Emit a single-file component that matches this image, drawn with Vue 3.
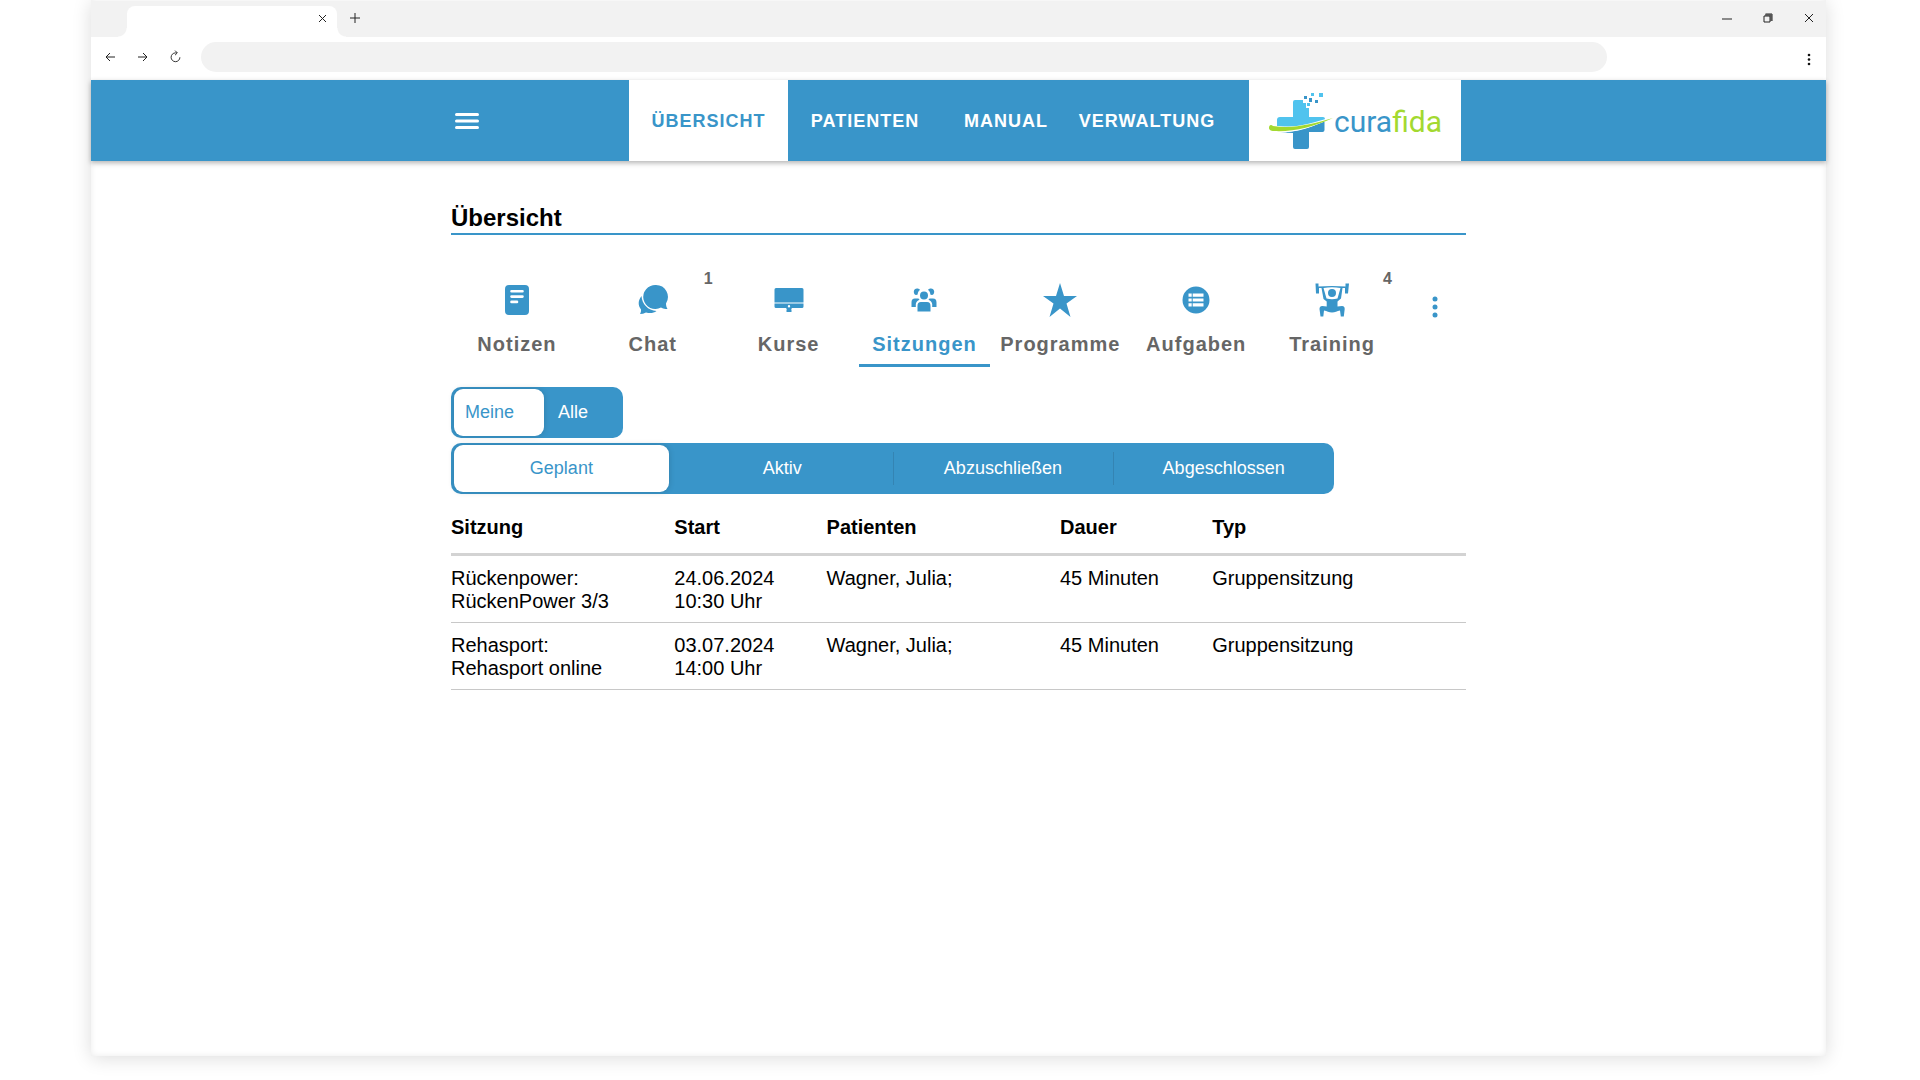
<template>
  <div class="browser-window">
    <div class="tab-strip">
      <div class="browser-tab">
        <button class="chrome-button" aria-label="Tab schließen">
          <svg width="9" height="9" viewBox="0 0 9 9"><path d="M1 1l7 7M8 1l-7 7" /></svg>
        </button>
      </div>
      <button class="chrome-button new-tab" aria-label="Neuer Tab">
        <svg width="10" height="10" viewBox="0 0 10 10"><path d="M5 0v10M0 5h10" /></svg>
      </button>
      <div class="window-controls">
        <button class="chrome-button" aria-label="Minimieren">
          <svg width="10" height="10" viewBox="0 0 10 10"><path d="M0 6h10" /></svg>
        </button>
        <button class="chrome-button" aria-label="Verkleinern">
          <svg width="10" height="10" viewBox="0 0 10 10">
            <path d="M1 3h6v6H1zM2.500 1h6.500v7M2 2h6v6" />
          </svg>
        </button>
        <button class="chrome-button" aria-label="Fenster schließen">
          <svg width="10" height="10" viewBox="0 0 10 10"><path d="M1 1l8 8M9 1l-8 8" /></svg>
        </button>
      </div>
    </div>

    <div class="toolbar">
      <button class="chrome-button" aria-label="Zurück">
        <svg width="10" height="10" viewBox="0 0 10 10"><path d="M10 5H1M5 1L1 5l4 4" /></svg>
      </button>
      <button class="chrome-button" aria-label="Vorwärts">
        <svg width="10" height="10" viewBox="0 0 10 10"><path d="M0 5h9M5 1l4 4-4 4" /></svg>
      </button>
      <button class="chrome-button" aria-label="Neu laden">
        <svg width="12" height="14" viewBox="0 0 12 14">
          <path d="M7.500 2.500H6a4.800 4.800 0 1 0 4.800 4.800M5.500 0L8 2.500 5.500 5" />
        </svg>
      </button>
      <input class="address-bar" type="text" aria-label="Adresse" />
      <button class="chrome-button browser-menu" aria-label="Browsermenü">
        <svg width="4" height="14" viewBox="0 0 4 14" class="dots">
          <circle cx="2" cy="3" r="1.300" /><circle cx="2" cy="7.500" r="1.300" /><circle cx="2" cy="12" r="1.300" />
        </svg>
      </button>
    </div>

    <header class="app-header">
      <div class="header-inner">
        <button class="menu-button" aria-label="Menü">
          <svg width="24" height="16" viewBox="0 0 24 16">
            <path d="M1.500 1.500h21M1.500 8h21M1.500 14.500h21" />
          </svg>
        </button>
        <nav class="main-nav">
          <a
            v-for="item in navItems"
            :key="item"
            href="#"
            class="nav-link"
            :class="{ active: item === activeNav }"
            @click.prevent="activeNav = item"
          >{{ item }}</a>
        </nav>
        <a href="#" class="brand" aria-label="curafida">
          <svg width="176" height="60" viewBox="0 0 176 60">
            <!-- Kreuz -->
            <path fill="#50c3ee" d="M24 9a2 2 0 0 1 2-2h8v3h3v5h3v9h14a2 2 0 0 1 2 2l-1 2C40 33 22 35 8 33v-6a3 3 0 0 1 3-3h13z" />
            <path fill="#3995c9" d="M11 39.500C26 39.500 42 34 55.500 28.500V37a2 2 0 0 1-2 2H40v15a2 2 0 0 1-2 2H26a2 2 0 0 1-2-2V40z" />
            <path fill="#fff" d="M0 33c0-3 3-3 5 0 20 3 38-3 59-9-20 11-39 16-56 15.500C2 39 0 37 0 33z" />
            <path fill="#a3d930" d="M0 35c0-3 2-4 4-2 21 3 39-2 60-8-20 9-40 14-59 13-3 0-5-1-5-3z" />
            <!-- Pixel -->
            <path fill="#50c3ee" d="M42 0h3v3h-3zM50 0h4v4h-4zM38 10h3v3h-3z" />
            <path fill="#3995c9" d="M35 3h3v3h-3zM40 5h3v4h-3zM46 7h3v3h-3z" />
            <text x="65" y="39" class="brand-text">cura<tspan class="brand-accent">fida</tspan></text>
          </svg>
        </a>
      </div>
    </header>

    <main class="content">
      <h1 class="page-title">Übersicht</h1>

      <div class="section-tabs">
        <button
          v-for="tab in tabs"
          :key="tab.label"
          class="section-tab"
          :class="{ active: tab.label === activeTab }"
          @click="activeTab = tab.label"
        >
          <svg class="tab-icon" width="34" height="34" viewBox="0 0 34 34">
            <path fill-rule="evenodd" :d="tab.icon" />
          </svg>
          <span>{{ tab.label }}</span>
          <span v-if="tab.count" class="tab-count">{{ tab.count }}</span>
        </button>
        <button class="more-button" aria-label="Mehr">
          <svg width="6" height="22" viewBox="0 0 6 22">
            <circle cx="3" cy="3" r="2.500" /><circle cx="3" cy="11" r="2.500" /><circle cx="3" cy="19" r="2.500" />
          </svg>
        </button>
      </div>

      <div class="segment segment-owner">
        <button
          v-for="owner in owners"
          :key="owner"
          :class="{ active: owner === activeOwner }"
          @click="activeOwner = owner"
        >{{ owner }}</button>
      </div>

      <div class="segment segment-status">
        <button
          v-for="status in statuses"
          :key="status"
          :class="{ active: status === activeStatus }"
          @click="activeStatus = status"
        >{{ status }}</button>
      </div>

      <table class="session-table">
        <thead>
          <tr>
            <th v-for="column in columns" :key="column" scope="col">{{ column }}</th>
          </tr>
        </thead>
        <tbody>
          <tr v-for="session in sessions" :key="session.date">
            <td>{{ session.group }}<br />{{ session.name }}</td>
            <td>{{ session.date }}<br />{{ session.time }}</td>
            <td>{{ session.patients }}</td>
            <td>{{ session.duration }}</td>
            <td>{{ session.type }}</td>
          </tr>
        </tbody>
      </table>
    </main>
  </div>
</template>

<script setup>
import { ref } from 'vue'

const navItems = ['ÜBERSICHT', 'PATIENTEN', 'MANUAL', 'VERWALTUNG']
const activeNav = ref('ÜBERSICHT')

const tabs = [
  {
    label: 'Notizen',
    icon: 'M9 2h16a4 4 0 0 1 4 4v22a4 4 0 0 1-4 4H9a4 4 0 0 1-4-4V6a4 4 0 0 1 4-4zM11.500 7a1.300 1.300 0 0 0 0 2.600h11a1.300 1.300 0 0 0 0-2.600zM11.500 12.300a1.300 1.300 0 0 0 0 2.600h11a1.300 1.300 0 0 0 0-2.600zM11.500 17.600a1.300 1.300 0 0 0 0 2.600h5.500a1.300 1.300 0 0 0 0-2.600z'
  },
  {
    label: 'Chat',
    count: 1,
    icon: 'M20 2a12 12 0 0 1 10 18.500c0 2 .5 4 1.500 5.500-2.500 0-4.500-.5-6.500-1.500A12 12 0 1 1 20 2zM5.500 13C6 21 12 27.500 20.500 28c-3 2.300-6.500 2.600-10.500 1.500-2 1-4 1.500-6 1.500.8-1.500 1.200-3 1-4.500-3.200-4.300-3-9 .5-13.500z'
  },
  {
    label: 'Kurse',
    icon: 'M4 5h26a1.500 1.500 0 0 1 1.500 1.500V19.500h-29V6.500A1.500 1.500 0 0 1 4 5zM2.500 20.500h29V23.500a1.500 1.500 0 0 1-1.500 1.500H20l-1 1.500h-4L14 25H4a1.500 1.500 0 0 1-1.500-1.500zM17 22a1.200 1.200 0 1 0 0 2.400 1.200 1.200 0 0 0 0-2.400zM14.500 26.500h5V29h-5z'
  },
  {
    label: 'Sitzungen',
    icon: 'M17 8.500a4 4 0 1 1 0 8 4 4 0 0 1 0-8zM10 5.500c1.500 0 2.500.5 3 1.500-1.600 1-2.300 2.500-2.300 4.500-2.500 1.500-4-.8-3.900-3C7 6.500 8.300 5.500 10 5.500zM24 5.500c-1.500 0-2.500.5-3 1.500 1.600 1 2.300 2.500 2.300 4.500 2.500 1.500 4-.8 3.900-3C27 6.500 25.700 5.500 24 5.500zM14 19h6c2.500 0 3.500 1.500 3.500 4v5.500h-13V23c0-2.500 1-4 3.500-4zM8 15.500h2.500c1 0 1.700.4 2 1.200-2 1-3.500 2.300-3.700 4.300V24H4.500v-4.500c0-2.500 1-4 3.500-4zM26 15.500h-2.500c-1 0-1.700.4-2 1.200 2 1 3.500 2.300 3.700 4.300V24h4.300v-4.500c0-2.500-1-4-3.500-4z'
  },
  {
    label: 'Programme',
    icon: 'M17 0l4 13h13L23.500 20.500 27.500 34 17 25.500 6.500 34l4-13.500L0 13h13z'
  },
  {
    label: 'Aufgaben',
    icon: 'M17 3.500a13.500 13.500 0 1 1 0 27 13.500 13.500 0 0 1 0-27zM9.500 10.500v3.200h3.200v-3.200zM13.700 10.500v3.200H24.500v-3.200zM9.500 15.400v3.200h3.200v-3.200zM13.700 15.400v3.200H24.500v-3.200zM9.500 20.300v3.200h3.200v-3.200zM13.700 20.300v3.200H24.500v-3.200z'
  },
  {
    label: 'Training',
    count: 4,
    icon: 'M0.500 0.500h3V3.500C12 2.700 22 2.700 30.500 3.500V0.500H34L33 10.500H30V5H27.500L26 15.500 22.500 18.500V23.500l4.500-.5c1.800 0 2.800 1 2.700 3L28.800 33.500H25.800L25 27.500c-3 .5-5 2-8 2s-5-1.500-8-2L8.300 33.500H5.500L4.500 26c0-2 1-3 2.700-3l4.500.5V18.500L8.500 16 6.500 5H4v5.500H1zM8.500 5L11.500 15.500C15 16.500 19 16.500 22.500 15.500L25.500 5C20 4 14 4 8.500 5zM17 6a4 4 0 1 1 0 8 4 4 0 0 1 0-8z'
  }
]
const activeTab = ref('Sitzungen')

const owners = ['Meine', 'Alle']
const activeOwner = ref('Meine')

const statuses = ['Geplant', 'Aktiv', 'Abzuschließen', 'Abgeschlossen']
const activeStatus = ref('Geplant')

const columns = ['Sitzung', 'Start', 'Patienten', 'Dauer', 'Typ']
const sessions = [
  {
    group: 'Rückenpower:',
    name: 'RückenPower 3/3',
    date: '24.06.2024',
    time: '10:30 Uhr',
    patients: 'Wagner, Julia;',
    duration: '45 Minuten',
    type: 'Gruppensitzung'
  },
  {
    group: 'Rehasport:',
    name: 'Rehasport online',
    date: '03.07.2024',
    time: '14:00 Uhr',
    patients: 'Wagner, Julia;',
    duration: '45 Minuten',
    type: 'Gruppensitzung'
  }
]
</script>

<style>
body {
  background: #fff;
}
</style>

<style scoped>
.browser-window {
  display: flex;
  flex-direction: column;
  box-sizing: border-box;
  min-height: calc(100vh - 24px);
  margin: 0 94px 24px 91px;
  padding-top: 1px;
  background: #fff;
  box-shadow: 0 2px 18px rgba(0, 0, 0, 0.14), inset 0 0 6px rgba(0, 0, 0, 0.08);
  font-family: "Liberation Sans", Arial, sans-serif;
  color: #000;
}

button {
  padding: 0;
  border: none;
  background: none;
  font-family: inherit;
  cursor: pointer;
}

/* Browserrahmen */
.tab-strip {
  display: flex;
  align-items: center;
  box-sizing: border-box;
  height: 36px;
  padding: 0 12px 0 36px;
  background: #f2f2f2;
}

.browser-tab {
  position: relative;
  display: flex;
  align-items: center;
  justify-content: flex-end;
  align-self: flex-end;
  box-sizing: border-box;
  width: 210px;
  height: 31px;
  padding: 0 10px 6px 0;
  border-radius: 8px 8px 0 0;
  background: #fff;
}

.browser-tab::before,
.browser-tab::after {
  content: "";
  position: absolute;
  bottom: 0;
  width: 9px;
  height: 9px;
}

.browser-tab::before {
  right: 100%;
  background: radial-gradient(circle at 0 0, #f2f2f2 8px, #fff 9px);
}

.browser-tab::after {
  left: 100%;
  background: radial-gradient(circle at 100% 0, #f2f2f2 8px, #fff 9px);
}

.chrome-button {
  display: flex;
  align-items: center;
  justify-content: center;
}

.chrome-button svg {
  fill: none;
  stroke: #222;
}

.chrome-button .dots {
  fill: #111;
  stroke: none;
}

.new-tab {
  margin-left: 13px;
  padding-bottom: 2px;
}

.window-controls {
  display: flex;
  gap: 31px;
  margin-left: auto;
  padding-bottom: 2px;
}

.toolbar {
  display: flex;
  align-items: center;
  box-sizing: border-box;
  height: 43px;
  padding: 0 15px 3px 13px;
  background: #fff;
}

.toolbar .chrome-button {
  width: 11px;
  margin-right: 22px;
}

.address-bar {
  flex: 0 1 1406px;
  box-sizing: border-box;
  height: 30px;
  margin: 0 auto 0 -2px;
  padding: 0 16px;
  border: none;
  border-radius: 15px;
  background: #f2f2f2;
}

.toolbar .browser-menu {
  width: 4px;
  margin-right: 0;
  padding-top: 3px;
}

/* Kopfzeile */
.app-header {
  position: relative;
  background: #3995c9;
  box-shadow: 0 2px 5px rgba(0, 0, 0, 0.3);
}

.header-inner {
  display: flex;
  align-items: stretch;
  box-sizing: border-box;
  max-width: 1015px;
  height: 81px;
  margin: 0 auto;
  padding: 0 5px 0 4px;
}

.menu-button svg {
  display: block;
  fill: none;
  stroke: #fff;
  stroke-width: 3px;
  stroke-linecap: round;
}

.main-nav {
  display: grid;
  grid-template-columns: 159px 154px 128px 154px;
  margin: 0 25px 0 auto;
}

.nav-link {
  display: flex;
  align-items: center;
  justify-content: center;
  padding-top: 2px;
  color: #fff;
  font-size: 18px;
  font-weight: 700;
  letter-spacing: 1px;
  text-decoration: none;
}

.nav-link.active {
  background: #fff;
  color: #3995c9;
}

.brand {
  box-sizing: border-box;
  width: 212px;
  padding: 13px 16px 0 20px;
  background: #fff;
}

.brand-text {
  fill: #3995c9;
  font-family: Roboto, sans-serif;
  font-size: 30px;
}

.brand-accent {
  fill: #a3d930;
}

/* Inhalt */
.content {
  width: 100%;
  max-width: 1015px;
  margin: 0 auto;
  padding-top: 43px;
}

.page-title {
  margin: 0;
  padding-bottom: 1px;
  border-bottom: 2px solid #3995c9;
  font-size: 24px;
  font-weight: 700;
  line-height: 28px;
}

.section-tabs {
  display: grid;
  grid-template-columns: repeat(7, 1fr) 66px;
  margin: 32px 0 0 -2px;
}

.section-tab {
  position: relative;
  display: flex;
  flex-direction: column;
  align-items: center;
  gap: 15px;
  height: 100px;
  margin: 0 2px;
  padding-top: 16px;
  border-bottom: 3px solid transparent;
  color: #666;
  font-size: 20px;
  font-weight: 700;
  letter-spacing: 1px;
  line-height: 24px;
}

.section-tab.active {
  border-bottom-color: #3995c9;
  color: #3995c9;
}

.tab-icon {
  fill: #3995c9;
}

.tab-count {
  position: absolute;
  top: 3px;
  right: 6px;
  font-size: 16px;
  letter-spacing: 0;
  line-height: 18px;
}

.more-button {
  padding: 0 0 18px 4px;
}

.more-button svg {
  fill: #3995c9;
}

/* Umschalter */
.segment {
  box-sizing: border-box;
  height: 51px;
  border-radius: 10px;
  background: #3995c9;
}

.segment button {
  position: relative;
  border-radius: 9px;
  color: #fff;
  font-size: 18px;
}

.segment button.active {
  margin: 2px 3px;
  background: #fff;
  box-shadow: 0 0 6px rgba(0, 0, 0, 0.16);
  color: #3995c9;
}

.segment-owner {
  display: flex;
  width: 172px;
  margin-top: 20px;
}

.segment-owner button {
  padding: 0 30px 0 11px;
}

.segment-status {
  display: grid;
  grid-template-columns: repeat(4, 1fr);
  width: 87%;
  margin-top: 5px;
}

/* Trennlinie zwischen inaktiven Segmenten */
.segment-status button:not(.active) + button::before {
  content: "";
  position: absolute;
  top: 9px;
  bottom: 9px;
  left: 0;
  width: 1px;
  background: #3484b3;
}

/* Tabelle */
.session-table {
  width: 100%;
  margin-top: 22px;
  border-collapse: separate;
  border-spacing: 0;
  table-layout: fixed;
  font-size: 20px;
  line-height: 23px;
}

.session-table th {
  width: 15%;
  padding: 0 0 14px;
  border-bottom: 3px solid #d3d3d3;
  text-align: left;
}

.session-table th:nth-child(1) {
  width: 22%;
}

.session-table th:nth-child(3) {
  width: 23%;
}

.session-table th:nth-child(5) {
  width: 25%;
}

.session-table td {
  padding: 11px 0 9px;
  border-bottom: 1px solid #c8c8c8;
  vertical-align: top;
}
</style>
